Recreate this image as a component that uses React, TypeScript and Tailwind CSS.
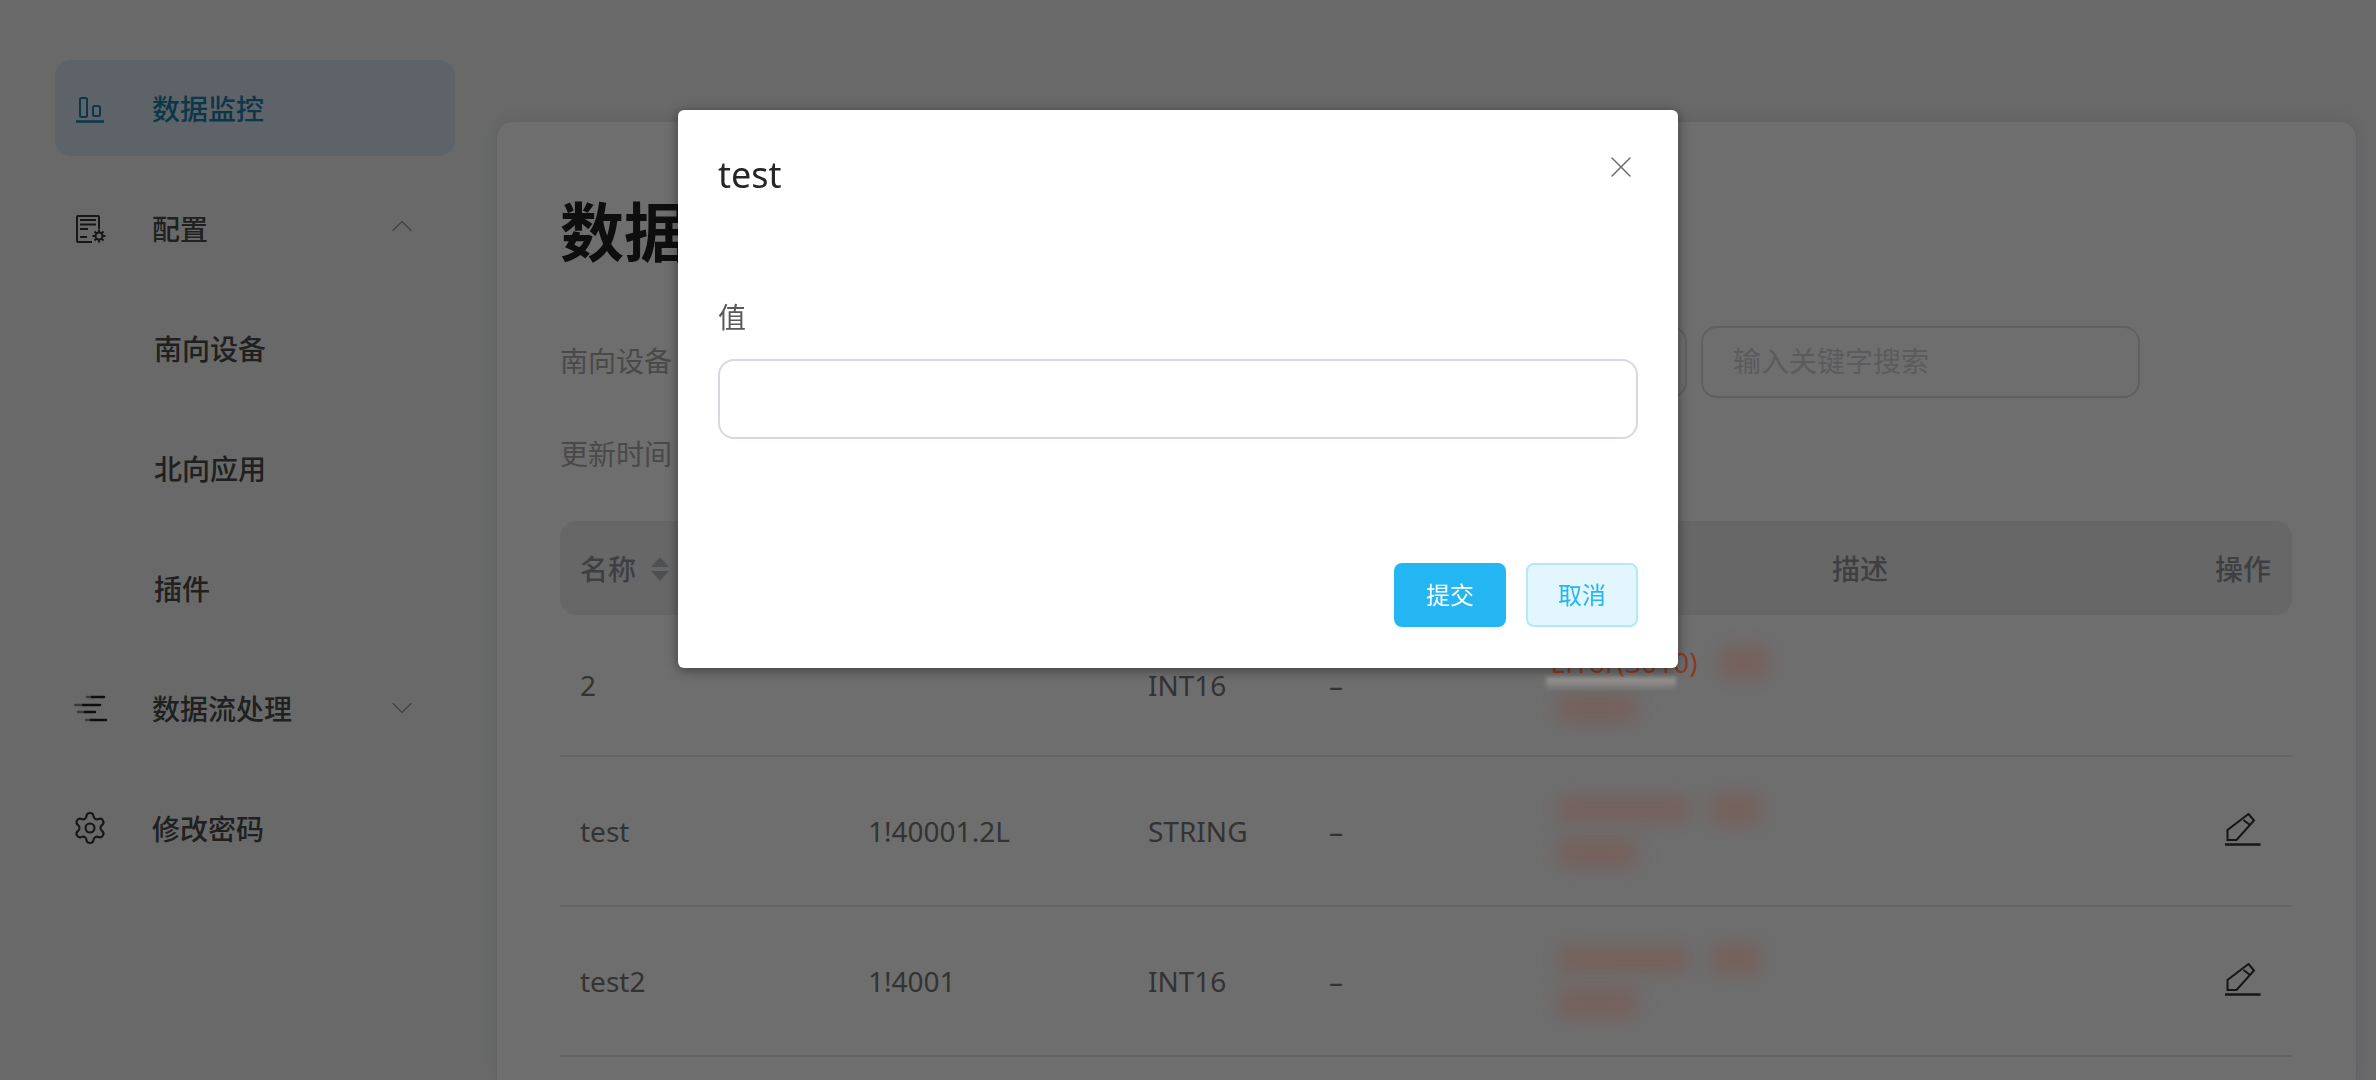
import React from 'react';
import { ChevronDown, ChevronUp, Settings, X } from 'lucide-react';

const ChartIcon = () => (
  <svg width="32" height="32" viewBox="0 0 32 32" fill="none" stroke="currentColor" strokeWidth="2">
    <rect x="6" y="6" width="7" height="19" rx="1.5" />
    <rect x="19" y="14" width="7" height="10" rx="1.5" />
    <path d="M2 29.5H30" strokeWidth="2.5" />
  </svg>
);

const ConfigIcon = () => (
  <svg width="34" height="32" viewBox="0 0 34 32" fill="none" stroke="currentColor" strokeWidth="2">
    <path d="M25 17V5a1 1 0 0 0-1-1H4a1 1 0 0 0-1 1v24a1 1 0 0 0 1 1h14" />
    <path d="M6 8H22M6 12.5H22M6 17H14M6 25H13" />
    <circle cx="25" cy="24" r="3.5" />
    <path d="M25 17.5V20M25 28V30.5M18.5 24H21M29 24H31.5M20.5 19.5L22.3 21.3M27.7 26.7L29.5 28.5M29.5 19.5L27.7 21.3M22.3 26.7L20.5 28.5" />
  </svg>
);

const FlowIcon = () => (
  <svg width="34" height="32" viewBox="0 0 34 32" fill="none" strokeWidth="2.5" strokeLinecap="round">
    <path d="M13 5H18" stroke="#8a8a8a" />
    <path d="M18 5H30" stroke="currentColor" />
    <path d="M1 13H9" stroke="#8a8a8a" />
    <path d="M9 13H26" stroke="currentColor" />
    <path d="M4 20H11" stroke="#8a8a8a" />
    <path d="M11 20H21" stroke="currentColor" />
    <path d="M12 28H17" stroke="#8a8a8a" />
    <path d="M17 28H32" stroke="currentColor" />
  </svg>
);

const PencilIcon = () => (
  <svg width="36" height="34" viewBox="0 0 36 34" fill="none" stroke="currentColor" strokeWidth="2">
    <path d="M23.5 1L29 7.5L11.5 27H2.5V17Z" />
    <path d="M18.5 7L25 12" />
    <path d="M0 31.5H35.5" strokeWidth="2.5" />
  </svg>
);

const SortCaret = () => (
  <svg width="20" height="24" viewBox="0 0 20 24" className="text-[#b8babe]" fill="currentColor">
    <path d="M10 0L19 10H1Z" />
    <path d="M10 24L1 14H19Z" />
  </svg>
);

const Patch = ({ className }: { className: string }) => (
  <span className={`relative z-20 inline-block rounded bg-[#76605b] blur-[9px] ${className}`} />
);

const subItems = ['南向设备', '北向应用', '插件'];

const rows = [
  { name: 'test', address: '1!40001.2L', type: 'STRING' },
  { name: 'test2', address: '1!4001', type: 'INT16' },
];

const tableGrid = 'grid grid-cols-[308px_280px_181px_217px_286px_1fr_96px] items-center';

export default function App() {
  return (
    <div className="flex h-screen overflow-hidden bg-[#f3f4f6] font-['Noto_Sans','Noto_Sans_CJK_SC',sans-serif]">
      {/* sidebar */}
      <aside className="w-[496px] shrink-0 pl-[55px] pr-[41px] pt-[60px] text-[28px] font-medium text-[#4a4a4a]">
        <div className="mb-[24px] flex h-[96px] items-center rounded-2xl bg-[#d8e6f4] pl-[19px] text-[#1a7fa5]">
          <span className="w-[78px]"><ChartIcon /></span>
          <span className="pt-[2px]">数据监控</span>
        </div>
        <div className="mb-[24px] flex h-[96px] items-center pl-[19px]">
          <span className="w-[78px] text-[#333]"><ConfigIcon /></span>
          <span className="pt-[2px]">配置</span>
          <ChevronUp size={36} strokeWidth={0.9} className="ml-auto mr-[35px] mb-[4px] text-[#999]" />
        </div>
        {subItems.map((item) => (
          <div key={item} className="mb-[24px] flex h-[96px] items-center pl-[99px] pt-[2px]">{item}</div>
        ))}
        <div className="mb-[24px] flex h-[96px] items-center pl-[19px]">
          <span className="w-[78px] text-[#222]"><FlowIcon /></span>
          <span className="pt-[2px]">数据流处理</span>
          <ChevronDown size={36} strokeWidth={0.9} className="ml-auto mr-[35px] mb-[1px] text-[#999]" />
        </div>
        <div className="flex h-[96px] items-center pl-[19px]">
          <span className="-ml-[2px] w-[80px] text-[#333]"><Settings size={36} strokeWidth={1.4} /></span>
          <span className="pt-[2px]">修改密码</span>
        </div>
      </aside>

      {/* main card */}
      <main className="mr-[19px] mt-[122px] flex-1 rounded-t-2xl border-x border-[#e0e0ec] bg-white pl-[63px] pr-[64px] pt-[64px] shadow-[0_-4px_16px_rgba(0,0,0,0.08)]">
        <h1 className="mb-[48px] text-[64px] font-bold leading-[92px] text-[#222]">数据监控</h1>

        <div className="flex w-[1580px] items-center text-[28px]">
          <span className="mr-[20px] -translate-y-[1px] text-[#aaa]">南向设备</span>
          <div className="mr-[14px] h-[72px] flex-1 rounded-2xl border-2 border-[#dcdce8]" />
          <div className="flex h-[72px] w-[439px] items-center rounded-2xl border-2 border-[#dcdce8] pb-[2px] pl-[30px] text-[#d4d4d8]">
            输入关键字搜索
          </div>
        </div>

        <div className="mt-[36px] h-[39px] text-[28px] leading-[40px] text-[#aaa]">更新时间</div>

        {/* table */}
        <div className="mt-[48px] text-[28px] text-[#777]">
          <div className={`${tableGrid} h-[94px] rounded-2xl bg-[#eeeff2] pt-[2px] font-medium text-[#929397]`}>
            <div className="flex items-center gap-[14px] pl-[20px]">名称 <SortCaret /></div>
            <div />
            <div />
            <div />
            <div />
            <div>描述</div>
            <div className="pl-[19px]">操作</div>
          </div>

          <div className={`${tableGrid} h-[142px] border-b-2 border-[#e6e6f1]`}>
            <div className="pl-[20px]">2</div>
            <div />
            <div>INT16</div>
            <div>–</div>
            <div className="relative pl-[4px]">
              <div className="flex h-[46px] items-center">
                <span className="relative z-20 text-[#8a3a22]">Error(3010)</span>
                <Patch className="ml-[22px] h-[30px] w-[48px]" />
              </div>
              <div className="flex h-[46px] items-center">
                <Patch className="ml-[8px] h-[28px] w-[78px]" />
              </div>
              <div className="absolute left-0 top-[38px] z-20 h-[14px] w-[130px] bg-linear-to-b from-[#a09c98] to-[#6e6e6e] blur-[2px]" />
            </div>
            <div />
            <div />
          </div>

          {rows.map((row) => (
            <div key={row.name} className={`${tableGrid} h-[150px] border-b-2 border-[#e6e6f1]`}>
              <div className="pl-[20px]">{row.name}</div>
              <div>{row.address}</div>
              <div>{row.type}</div>
              <div>–</div>
              <div className="pl-[4px]">
                <div className="flex h-[44px] items-center">
                  <Patch className="ml-[8px] h-[24px] w-[130px]" />
                  <Patch className="ml-[24px] h-[30px] w-[48px]" />
                </div>
                <div className="flex h-[44px] items-center">
                  <Patch className="ml-[8px] h-[28px] w-[78px]" />
                </div>
              </div>
              <div />
              <div className="-mt-[2px] pl-[29px] text-[#333]"><PencilIcon /></div>
            </div>
          ))}
        </div>
      </main>

      {/* dialog */}
      <div className="fixed inset-0 z-10 bg-[rgba(0,0,0,0.57)]" />
      <div className="fixed left-[678px] top-[110px] z-30 flex h-[558px] w-[1000px] flex-col rounded-md bg-white px-[40px] shadow-[0_2px_12px_rgba(0,0,0,0.45)]">
        <div className="pt-[39px] text-[36px] leading-[52px] text-[#262626]">test</div>
        <X size={36} strokeWidth={1} className="absolute right-[39px] top-[39px] text-[#6b6b6b]" />
        <div className="mt-[96px] text-[28px] leading-[40px] text-[#595959]">值</div>
        <div className="mt-[22px] h-[80px] rounded-2xl border-2 border-[#d8d8e2]" />
        <div className="mt-[124px] flex justify-end gap-[20px] text-[24px]">
          <button className="h-[64px] w-[112px] rounded-lg bg-[#24b6f2] text-white">提交</button>
          <button className="h-[64px] w-[112px] rounded-lg border-2 border-[#b3e8fb] bg-[#e3f6fd] text-[#24b6f2]">取消</button>
        </div>
      </div>
    </div>
  );
}
